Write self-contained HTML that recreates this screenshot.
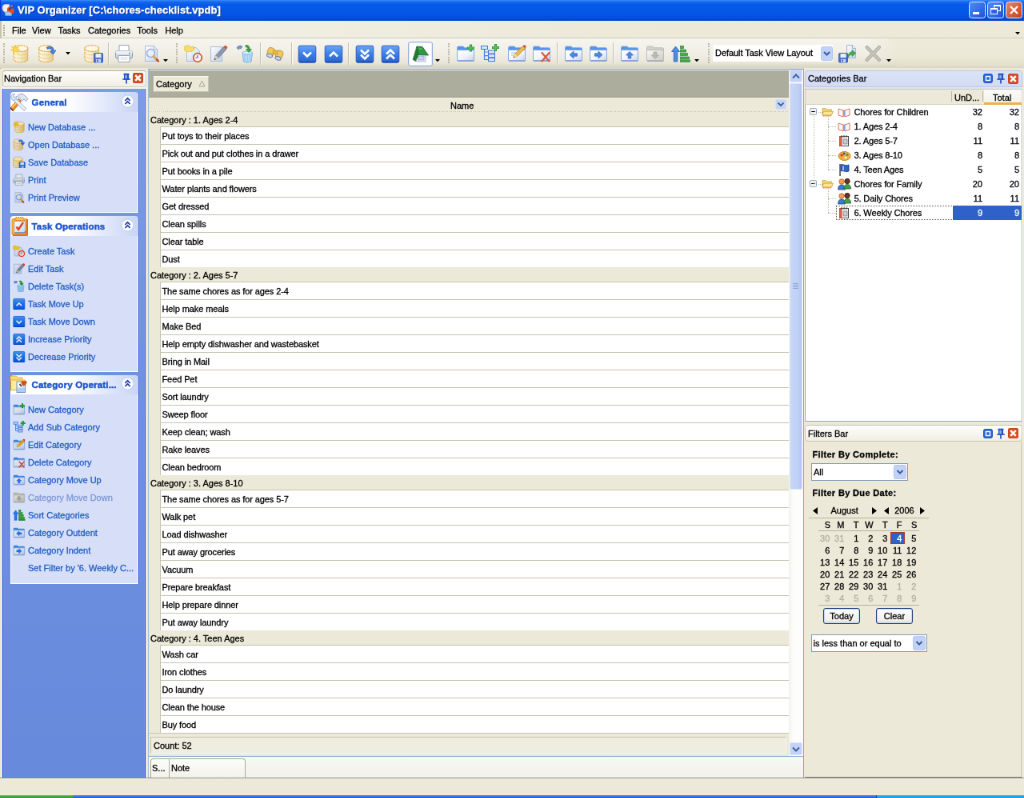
<!DOCTYPE html><html><head><meta charset="utf-8"><title>VIP Organizer</title><style>
html,body{margin:0;padding:0;background:#ECE9D8;overflow:hidden;width:1024px;height:798px}
#w{position:absolute;left:0;top:0;width:1280px;height:998px;transform:scale(.8);transform-origin:0 0;
 font-family:"Liberation Sans",sans-serif;font-size:11px;color:#000;overflow:hidden;will-change:transform;-webkit-text-stroke:0.3px}
#w div,#w span,#w svg{position:absolute;box-sizing:border-box;white-space:nowrap}
.t{line-height:14px;height:14px}
</style></head><body><div id="w">
<svg style="left:0;top:0" width="0" height="0"><defs>
<linearGradient id="gcyl" x1="0" x2="1" y1="0" y2="0"><stop offset="0" stop-color="#FDF8E6"/><stop offset=".45" stop-color="#F6ECCB"/><stop offset="1" stop-color="#E3CE98"/></linearGradient>
<linearGradient id="gblue" x1="0" x2="0" y1="0" y2="1"><stop offset="0" stop-color="#6CA6F6"/><stop offset=".5" stop-color="#3B7EE6"/><stop offset="1" stop-color="#2C64CC"/></linearGradient>
<linearGradient id="gfold" x1="0" x2="1" y1="0" y2="1"><stop offset="0" stop-color="#FFFFFF"/><stop offset=".55" stop-color="#F0F4FC"/><stop offset="1" stop-color="#C4D4F0"/></linearGradient>
<linearGradient id="gfoldg" x1="0" x2="1" y1="0" y2="1"><stop offset="0" stop-color="#FAFAF8"/><stop offset="1" stop-color="#CCCBC4"/></linearGradient>
<linearGradient id="gpaper" x1="0" x2="1" y1="0" y2="1"><stop offset="0" stop-color="#FFFFFF"/><stop offset="1" stop-color="#C4D4F0"/></linearGradient>
</defs></svg>
<div style="left:0px;top:0px;width:1280px;height:25.7px;background:linear-gradient(#3E8CF8 0,#1568F0 2.5px,#075AEA 6px,#0556E6 18px,#044EDC 23px,#0242C8 25.7px)"></div>
<div class="t" style="left:22px;top:4px;font-weight:bold;font-size:13px;color:#fff;line-height:18px;height:18px;text-shadow:1px 1px 0 #0A2A86;letter-spacing:0.05px">VIP Organizer [C:\chores-checklist.vpdb]</div>
<svg style="left:2px;top:4.5px" width="17" height="16" viewBox="0 0 17 16"><path d="M1 4C1 1.5 3 .5 5 .5H9.5L10 9.5L4 10C2 9.5 1 7 1 4Z" fill="#F8ECE6" stroke="#E8C4B8" stroke-width=".6"/><path d="M4 10H12.5V14.5H5Z" fill="#A8C8F4" stroke="#7CA4E0" stroke-width=".6"/><path d="M7 5.5L9 3.5L10.5 5.5V9.5H7Z" fill="#E84C14"/><path d="M11 2L13 1L14 3L12.5 4Z" fill="#F06828"/><path d="M10.5 6L15.5 5.5V11.5H11Z" fill="#E85018"/><circle cx="10" cy="6.5" r="1" fill="#302018"/></svg>
<div style="left:0px;top:0px;width:1.2px;height:25.7px;background:#0A3CC4"></div>
<div style="left:1211.3px;top:2px;width:20.7px;height:21px;border-radius:3.5px;border:1.2px solid #E4ECFC;background:linear-gradient(135deg,#4F8CF5,#1F55D8)"><div style="left:3.5px;top:11.5px;width:8px;height:3.2px;background:#fff"></div></div>
<div style="left:1234px;top:2px;width:20.7px;height:21px;border-radius:3.5px;border:1.2px solid #E4ECFC;background:linear-gradient(135deg,#4F8CF5,#1F55D8)"><div style="left:7px;top:3px;width:9px;height:8px;border:1px solid #fff;border-top-width:2px"></div><div style="left:3px;top:7px;width:9px;height:8px;border:1px solid #fff;border-top-width:2px;background:#2E62DC"></div></div>
<div style="left:1257px;top:2px;width:20.7px;height:21px;border-radius:3.5px;border:1.2px solid #E4ECFC;background:linear-gradient(135deg,#E88664,#C8401C)"><svg style="left:3px;top:3px" width="13" height="13" viewBox="0 0 13 13"><path d="M2 2 L11 11 M11 2 L2 11" stroke="#fff" stroke-width="2.2"/></svg></div>
<div style="left:0px;top:25.7px;width:1280px;height:22.3px;background:linear-gradient(90deg,#F4F3EA 0,#F1EFE3 25%,#EDEADA 60%,#ECE9D8 100%);border-bottom:1.2px solid #D2CEBC"></div>
<div style="left:0px;top:26px;width:2px;height:60px;background:#C9C3AC"></div>
<div style="left:4px;top:31px;width:2px;height:2px;background:#B5B09D"></div>
<div style="left:4px;top:34px;width:2px;height:2px;background:#B5B09D"></div>
<div style="left:4px;top:37px;width:2px;height:2px;background:#B5B09D"></div>
<div style="left:4px;top:40px;width:2px;height:2px;background:#B5B09D"></div>
<div style="left:4px;top:43px;width:2px;height:2px;background:#B5B09D"></div>
<div class="t" style="left:15.0px;top:30.8px;">File</div>
<div class="t" style="left:40.0px;top:30.8px;">View</div>
<div class="t" style="left:72.5px;top:30.8px;">Tasks</div>
<div class="t" style="left:110.0px;top:30.8px;">Categories</div>
<div class="t" style="left:171.25px;top:30.8px;">Tools</div>
<div class="t" style="left:206.25px;top:30.8px;">Help</div>
<svg style="left:1269px;top:39.5px" width="6" height="3.4" viewBox="0 0 7 4"><path d="M0 0H7L3.5 4Z" fill="#000"/></svg>
<div style="left:0px;top:48px;width:1280px;height:37px;background:linear-gradient(#EEEBDB 0,#ECE9D8 60%,#E4E0CD 90%,#D9D5C2 100%)"></div>
<div style="left:0px;top:48px;width:1124px;height:35px;background:linear-gradient(#F6F5EF 0,#F1EFE5 55%,#E9E6D8 88%,#DAD6C4 100%);border-radius:0 4px 4px 0;-webkit-mask-image:linear-gradient(90deg,#000 96%,transparent 100%)"></div>
<div style="left:4px;top:54.0px;width:2.2px;height:2.2px;background:#B9B5A2;border-radius:.5px"></div>
<div style="left:4px;top:57.3px;width:2.2px;height:2.2px;background:#B9B5A2;border-radius:.5px"></div>
<div style="left:4px;top:60.6px;width:2.2px;height:2.2px;background:#B9B5A2;border-radius:.5px"></div>
<div style="left:4px;top:63.9px;width:2.2px;height:2.2px;background:#B9B5A2;border-radius:.5px"></div>
<div style="left:4px;top:67.2px;width:2.2px;height:2.2px;background:#B9B5A2;border-radius:.5px"></div>
<div style="left:4px;top:70.5px;width:2.2px;height:2.2px;background:#B9B5A2;border-radius:.5px"></div>
<div style="left:4px;top:73.8px;width:2.2px;height:2.2px;background:#B9B5A2;border-radius:.5px"></div>
<div style="left:4px;top:77.1px;width:2.2px;height:2.2px;background:#B9B5A2;border-radius:.5px"></div>
<svg style="left:13px;top:55px" width="24" height="24" viewBox="0 0 24 24"><g transform="translate(1.2,0)"><path d="M3 5.5V18.8C3 24 20.5 24 20.5 18.8V5.5Z" fill="url(#gcyl)" stroke="#E2A22E" stroke-width="1.15" stroke-dasharray="1.5 .8"/>
<ellipse cx="11.75" cy="5.5" rx="8.75" ry="3.9" fill="#FDF8E4" stroke="#E2A22E" stroke-width="1.15" stroke-dasharray="1.5 .8"/>
<path d="M3 10.2C3 15 20.5 15 20.5 10.2M3 14.6C3 19.4 20.5 19.4 20.5 14.6" fill="none" stroke="#EDBE62" stroke-width="1" stroke-dasharray="1.5 .9"/></g><path d="M6 1L7 4.5L10.5 3L8.5 6L12 7.5L8.3 8L9.5 11.5L6.5 9L4 12L4.3 8.3L0.5 8L3.8 6L1.5 3L5 4.3Z" fill="#FBD94A" stroke="#EDB52A" stroke-width=".6"/></svg>
<svg style="left:47px;top:55px" width="24" height="24" viewBox="0 0 24 24"><g transform="translate(-1.2,0)"><path d="M3 5.5V18.8C3 24 20.5 24 20.5 18.8V5.5Z" fill="url(#gcyl)" stroke="#E2A22E" stroke-width="1.15" stroke-dasharray="1.5 .8"/>
<ellipse cx="11.75" cy="5.5" rx="8.75" ry="3.9" fill="#FDF8E4" stroke="#E2A22E" stroke-width="1.15" stroke-dasharray="1.5 .8"/>
<path d="M3 10.2C3 15 20.5 15 20.5 10.2M3 14.6C3 19.4 20.5 19.4 20.5 14.6" fill="none" stroke="#EDBE62" stroke-width="1" stroke-dasharray="1.5 .9"/></g><path d="M11 4.5C15 1.5 20 3.5 20.5 8.5L23 8L19.5 13L15.5 9.5L18 9C17.5 6 14.5 5 12.5 6.5Z" fill="#4A84DC" stroke="#2A5CB4" stroke-width=".7"/></svg>
<svg style="left:105px;top:55px" width="24" height="24" viewBox="0 0 24 24"><g transform="translate(-2,0)"><path d="M3 5.5V18.8C3 24 20.5 24 20.5 18.8V5.5Z" fill="url(#gcyl)" stroke="#E2A22E" stroke-width="1.15" stroke-dasharray="1.5 .8"/>
<ellipse cx="11.75" cy="5.5" rx="8.75" ry="3.9" fill="#FDF8E4" stroke="#E2A22E" stroke-width="1.15" stroke-dasharray="1.5 .8"/>
<path d="M3 10.2C3 15 20.5 15 20.5 10.2M3 14.6C3 19.4 20.5 19.4 20.5 14.6" fill="none" stroke="#EDBE62" stroke-width="1" stroke-dasharray="1.5 .9"/></g><rect x="12.5" y="11.5" width="11" height="11.5" rx="1" fill="#4878D0" stroke="#2E56A8" stroke-width=".9"/><rect x="14.5" y="12" width="7" height="5" fill="#E8EEF8"/><rect x="15" y="19" width="6" height="4" fill="#C8D4EC"/><rect x="16" y="19.7" width="1.6" height="2.6" fill="#2E56A8"/></svg>
<svg style="left:143px;top:55px" width="24" height="24" viewBox="0 0 24 24"><path d="M6 1.5H18V9H6Z" fill="#FFFFFF" stroke="#8C9CB4" stroke-width=".9"/><rect x="1.5" y="8.5" width="21" height="9.5" rx="2.2" fill="#D4DAE6" stroke="#7C8CA8" stroke-width=".9"/><rect x="1.5" y="8.5" width="21" height="4" rx="2" fill="#EEF1F6"/><path d="M5 14.5H19V22.5H5Z" fill="#FFFFFF" stroke="#8C9CB4" stroke-width=".9"/><path d="M7.5 17H16.5M7.5 19H16.5" stroke="#C4CCDC" stroke-width=".8"/><circle cx="19" cy="11.5" r=".9" fill="#48B048"/></svg>
<svg style="left:177px;top:55px" width="24" height="24" viewBox="0 0 24 24"><path d="M4.5 2.5H15.5L19.5 6.5V21.5H4.5Z" fill="url(#gpaper)" stroke="#A4B4D4" stroke-width=".9"/><path d="M15.5 2.5V6.5H19.5" fill="#E8EEFA" stroke="#A4B4D4" stroke-width=".9"/><circle cx="11.5" cy="11.5" r="5" fill="#E6F0FC" fill-opacity=".85" stroke="#9CB0D4" stroke-width="1.6"/><path d="M15 15.5L20.5 21" stroke="#D8A848" stroke-width="2.6" stroke-linecap="round"/><path d="M19 19.5L20.8 21.3" stroke="#C05030" stroke-width="2.6" stroke-linecap="round"/></svg>
<svg style="left:230px;top:55px" width="24" height="24" viewBox="0 0 24 24"><path d="M3.5 4.5H15L19.5 9V21.5H3.5Z" fill="url(#gpaper)" stroke="#A4B4D4" stroke-width=".9"/><path d="M.8 3L5.5 1.5L7.5 4L11.5 3L13.5 6L10 9.5L6.5 9L3.5 10.5L.8 8Z" fill="#FADC6C" stroke="#E8B838" stroke-width=".8"/><circle cx="17" cy="17" r="5.3" fill="#F4F6FA" stroke="#DC4C34" stroke-width="1.7"/><path d="M17 14V17H14.5" stroke="#506078" stroke-width="1.1" fill="none"/></svg>
<svg style="left:261px;top:55px" width="24" height="24" viewBox="0 0 24 24"><path d="M2.5 3.5H16.5V21.5H2.5Z" fill="url(#gpaper)" stroke="#A4B4D4" stroke-width=".9"/><path d="M7 20L8.5 14.5L18.5 3.5L22 6.5L12 17.5Z" fill="#8C98AC" stroke="#5C6880" stroke-width=".7"/><path d="M18.5 3.5L20 2C21.5 1.5 23.5 3 23.2 4.8L22 6.5Z" fill="#DC4C34"/><path d="M7 20L8.5 14.5L12 17.5Z" fill="#F0D8A0"/><path d="M7 20L7.6 17.8L8.8 18.9Z" fill="#303030"/></svg>
<svg style="left:294px;top:55px" width="24" height="24" viewBox="0 0 24 24"><path d="M9 11H21.5L20 22C17 23.5 13.5 23.5 10.5 22Z" fill="#B8DCF8" stroke="#7CB4E4" stroke-width="1"/><path d="M12 13V21.5M15.2 13V22M18.5 13V21.5" stroke="#98C8F0" stroke-width="1.2"/><ellipse cx="15.2" cy="11" rx="6.4" ry="2" fill="#DCEEFC" stroke="#7CB4E4" stroke-width=".9"/><path d="M2 5C3 2 7 1 9 3.5L7 6C5.5 5 4.5 5.5 4.5 7Z" fill="#7C94C8" stroke="#5870A8" stroke-width=".6"/><path d="M13 1.5C16.5 1 18.5 3.5 18 6.5L20.5 6.5L17 10.5L13.5 6.5L15.8 6.5C15.8 4.8 15 3.8 13 3.8Z" fill="#3CA448" stroke="#207C30" stroke-width=".6"/></svg>
<svg style="left:332px;top:55px" width="24" height="24" viewBox="0 0 24 24"><g transform="rotate(18 12 12)"><rect x="2" y="6.5" width="8.5" height="10" rx="3" fill="#F0C860" stroke="#C8982C" stroke-width=".9"/><rect x="13" y="6.5" width="8.5" height="10" rx="3" fill="#F0C860" stroke="#C8982C" stroke-width=".9"/><rect x="9" y="8" width="5.5" height="5" fill="#E8B848" stroke="#C8982C" stroke-width=".8"/><ellipse cx="6.2" cy="16.5" rx="3.6" ry="2.2" fill="#C8D4F0" stroke="#6C7C9C" stroke-width="1"/><ellipse cx="17.2" cy="16.5" rx="3.6" ry="2.2" fill="#C8D4F0" stroke="#6C7C9C" stroke-width="1"/></g></svg>
<svg style="left:372px;top:55px" width="24" height="24" viewBox="0 0 24 24"><rect x="1.2" y="2.2" width="21.6" height="21" rx="2" fill="url(#gblue)" stroke="#2A5CC0" stroke-width="1"/><rect x="1.7" y="21.4" width="20.6" height="1.8" rx="1" fill="#1E4CA8" opacity=".7"/><path d="M7 10.5L12 15.5L17 10.5" fill="none" stroke="#fff" stroke-width="2.6" stroke-linejoin="miter"/></svg>
<svg style="left:405px;top:55px" width="24" height="24" viewBox="0 0 24 24"><rect x="1.2" y="2.2" width="21.6" height="21" rx="2" fill="url(#gblue)" stroke="#2A5CC0" stroke-width="1"/><rect x="1.7" y="21.4" width="20.6" height="1.8" rx="1" fill="#1E4CA8" opacity=".7"/><path d="M7 15.5L12 10.5L17 15.5" fill="none" stroke="#fff" stroke-width="2.6" stroke-linejoin="miter"/></svg>
<svg style="left:444px;top:55px" width="24" height="24" viewBox="0 0 24 24"><rect x="1.2" y="2.2" width="21.6" height="21" rx="2" fill="url(#gblue)" stroke="#2A5CC0" stroke-width="1"/><rect x="1.7" y="21.4" width="20.6" height="1.8" rx="1" fill="#1E4CA8" opacity=".7"/><path d="M7 7.5L12 12.5L17 7.5M7 13.5L12 18.5L17 13.5" fill="none" stroke="#fff" stroke-width="2.6" stroke-linejoin="miter"/></svg>
<svg style="left:476px;top:55px" width="24" height="24" viewBox="0 0 24 24"><rect x="1.2" y="2.2" width="21.6" height="21" rx="2" fill="url(#gblue)" stroke="#2A5CC0" stroke-width="1"/><rect x="1.7" y="21.4" width="20.6" height="1.8" rx="1" fill="#1E4CA8" opacity=".7"/><path d="M7 12.5L12 7.5L17 12.5M7 18.5L12 13.5L17 18.5" fill="none" stroke="#fff" stroke-width="2.6" stroke-linejoin="miter"/></svg>
<svg style="left:570px;top:55px" width="24" height="24" viewBox="0 0 24 24"><path d="M1.5 7V4.5C1.5 3.5 2.2 3 3 3H9L10.5 4.7H21C22 4.7 22.5 5.4 22.5 6.2V7.5H1.5Z" fill="#5594EA" stroke="#7CA4DC" stroke-width=".8"/><path d="M1.5 7.5H22.5V20.5H1.5Z" fill="url(#gfold)" stroke="#7CA4DC" stroke-width=".9"/><path d="M2 21.4H22.5" stroke="#7C8CB0" stroke-width="1" opacity=".8"/><path d="M18.5 0.5V9.5M14.0 5H23.0" stroke="#2C9C3C" stroke-width="3.2"/><path d="M18.5 1.2999999999999998V8.7M14.8 5H22.2" stroke="#58C060" stroke-width="1.4"/></svg>
<svg style="left:600px;top:55px" width="24" height="24" viewBox="0 0 24 24"><path d="M5.5 6V19.5H10M5.5 10H10M5.5 14.7H10" stroke="#4C84DC" stroke-width="1.2" fill="none"/><rect x="1.5" y="2.5" width="8" height="4" fill="#DCE8FA" stroke="#3C78DC" stroke-width="1"/><rect x="10.5" y="8" width="8" height="4" fill="#DCE8FA" stroke="#3C78DC" stroke-width="1"/><rect x="10.5" y="12.8" width="8" height="4" fill="#DCE8FA" stroke="#3C78DC" stroke-width="1"/><rect x="10.5" y="17.6" width="8" height="4" fill="#DCE8FA" stroke="#3C78DC" stroke-width="1"/><path d="M19.5 0.0V9.0M15.0 4.5H24.0" stroke="#2C9C3C" stroke-width="3.2"/><path d="M19.5 0.7999999999999998V8.2M15.8 4.5H23.2" stroke="#58C060" stroke-width="1.4"/></svg>
<svg style="left:634px;top:55px" width="24" height="24" viewBox="0 0 24 24"><path d="M1.5 7V4.5C1.5 3.5 2.2 3 3 3H9L10.5 4.7H21C22 4.7 22.5 5.4 22.5 6.2V7.5H1.5Z" fill="#5594EA" stroke="#7CA4DC" stroke-width=".8"/><path d="M1.5 7.5H22.5V20.5H1.5Z" fill="url(#gfold)" stroke="#7CA4DC" stroke-width=".9"/><path d="M2 21.4H22.5" stroke="#7C8CB0" stroke-width="1" opacity=".8"/><path d="M5 11H13M5 14H11" stroke="#A8BCE0" stroke-width="1"/><path d="M8 17L9.5 12.5L19.5 2.5L22.5 5.5L12.5 15.5Z" fill="#F0B848" stroke="#B88428" stroke-width=".7"/><path d="M19.5 2.5L21 1.2C22.3 .8 23.8 2.2 23.5 3.8L22.5 5.5Z" fill="#DC4C34"/><path d="M8 17L9.5 12.5L12.5 15.5Z" fill="#F4E4C0"/><path d="M8 17L8.6 15.2L9.8 16.3Z" fill="#303030"/></svg>
<svg style="left:665px;top:55px" width="24" height="24" viewBox="0 0 24 24"><path d="M1.5 7V4.5C1.5 3.5 2.2 3 3 3H9L10.5 4.7H21C22 4.7 22.5 5.4 22.5 6.2V7.5H1.5Z" fill="#5594EA" stroke="#7CA4DC" stroke-width=".8"/><path d="M1.5 7.5H22.5V20.5H1.5Z" fill="url(#gfold)" stroke="#7CA4DC" stroke-width=".9"/><path d="M2 21.4H22.5" stroke="#7C8CB0" stroke-width="1" opacity=".8"/><path d="M12.5 11L21.5 21.5M21.5 11L12.5 21.5" stroke="#E0583C" stroke-width="2.2" stroke-linecap="round"/></svg>
<svg style="left:705px;top:55px" width="24" height="24" viewBox="0 0 24 24"><path d="M1.5 7V4.5C1.5 3.5 2.2 3 3 3H9L10.5 4.7H21C22 4.7 22.5 5.4 22.5 6.2V7.5H1.5Z" fill="#5594EA" stroke="#7CA4DC" stroke-width=".8"/><path d="M1.5 7.5H22.5V20.5H1.5Z" fill="url(#gfold)" stroke="#7CA4DC" stroke-width=".9"/><path d="M2 21.4H22.5" stroke="#7C8CB0" stroke-width="1" opacity=".8"/><path d="M7 13.5L12 9V11.8H16.5V15.2H12V18Z" fill="#4C88E4" stroke="#2C60C0" stroke-width=".7"/></svg>
<svg style="left:736px;top:55px" width="24" height="24" viewBox="0 0 24 24"><path d="M1.5 7V4.5C1.5 3.5 2.2 3 3 3H9L10.5 4.7H21C22 4.7 22.5 5.4 22.5 6.2V7.5H1.5Z" fill="#5594EA" stroke="#7CA4DC" stroke-width=".8"/><path d="M1.5 7.5H22.5V20.5H1.5Z" fill="url(#gfold)" stroke="#7CA4DC" stroke-width=".9"/><path d="M2 21.4H22.5" stroke="#7C8CB0" stroke-width="1" opacity=".8"/><path d="M17 13.5L12 9V11.8H7.5V15.2H12V18Z" fill="#4C88E4" stroke="#2C60C0" stroke-width=".7"/></svg>
<svg style="left:775px;top:55px" width="24" height="24" viewBox="0 0 24 24"><path d="M1.5 7V4.5C1.5 3.5 2.2 3 3 3H9L10.5 4.7H21C22 4.7 22.5 5.4 22.5 6.2V7.5H1.5Z" fill="#5594EA" stroke="#7CA4DC" stroke-width=".8"/><path d="M1.5 7.5H22.5V20.5H1.5Z" fill="url(#gfold)" stroke="#7CA4DC" stroke-width=".9"/><path d="M2 21.4H22.5" stroke="#7C8CB0" stroke-width="1" opacity=".8"/><path d="M12 9.5L16.5 14H13.8V18H10.2V14H7.5Z" fill="#4C88E4" stroke="#2C60C0" stroke-width=".7"/></svg>
<svg style="left:807px;top:55px" width="24" height="24" viewBox="0 0 24 24"><path d="M1.5 7V4.5C1.5 3.5 2.2 3 3 3H9L10.5 4.7H21C22 4.7 22.5 5.4 22.5 6.2V7.5H1.5Z" fill="#D4D2CA" stroke="#B8B6AE" stroke-width=".8"/><path d="M1.5 7.5H22.5V20.5H1.5Z" fill="url(#gfoldg)" stroke="#B8B6AE" stroke-width=".9"/><path d="M2 21.4H22.5" stroke="#7C8CB0" stroke-width="1" opacity=".8"/><path d="M12 18.5L16.5 14H13.8V10H10.2V14H7.5Z" fill="#BCBAB2" stroke="#A4A29A" stroke-width=".7"/></svg>
<svg style="left:839px;top:55px" width="24" height="24" viewBox="0 0 24 24"><path d="M5.5 3L10.5 9.5H7.8V22H3.2V9.5H0.5Z" fill="#4C8CE4" stroke="#2A60B8" stroke-width=".8"/><g fill="#4CAC50" stroke="#2C8434" stroke-width=".7"><rect x="11.5" y="2.5" width="4" height="3"/><rect x="11.5" y="7" width="7" height="3"/><rect x="11.5" y="11.5" width="9" height="3"/><rect x="11.5" y="16" width="11" height="3"/><rect x="11.5" y="20" width="12" height="2.5"/></g></svg>
<svg style="left:1047px;top:55px" width="24" height="24" viewBox="0 0 24 24"><path d="M11.5 1.5H18.5L22.5 5.5V17.5H11.5Z" fill="url(#gpaper)" stroke="#98ACD4" stroke-width=".9"/><path d="M18.5 1.5V5.5H22.5" fill="#E8EEFA" stroke="#98ACD4" stroke-width=".9"/><rect x="1.5" y="11.5" width="11" height="11.5" rx="1" fill="#4878D0" stroke="#2E56A8" stroke-width=".9"/><rect x="3.5" y="12" width="7" height="5" fill="#E8EEF8"/><rect x="4" y="19" width="6" height="4" fill="#C8D4EC"/><rect x="5" y="19.7" width="1.6" height="2.6" fill="#2E56A8"/><path d="M13 17C13 12 15 10 18 10V7.5L22.5 11.5L18 15.5V13C16 13 14.5 14 13 17Z" fill="#48AC50" stroke="#2C8434" stroke-width=".7"/></svg>
<svg style="left:1079px;top:55px" width="24" height="24" viewBox="0 0 24 24"><path d="M4.5 4L20 20M20 4L4.5 20" stroke="#B0AEA4" stroke-width="4.2" stroke-linecap="round"/><path d="M4.5 4L20 20M20 4L4.5 20" stroke="#C8C6BC" stroke-width="2" stroke-linecap="round"/></svg>
<div style="left:135px;top:53px;width:1px;height:28px;background:#C5C1AE"></div>
<div style="left:136px;top:53px;width:1px;height:28px;background:#FBFAF6"></div>
<div style="left:325px;top:53px;width:1px;height:28px;background:#C5C1AE"></div>
<div style="left:326px;top:53px;width:1px;height:28px;background:#FBFAF6"></div>
<div style="left:364px;top:53px;width:1px;height:28px;background:#C5C1AE"></div>
<div style="left:365px;top:53px;width:1px;height:28px;background:#FBFAF6"></div>
<div style="left:435px;top:53px;width:1px;height:28px;background:#C5C1AE"></div>
<div style="left:436px;top:53px;width:1px;height:28px;background:#FBFAF6"></div>
<div style="left:696px;top:53px;width:1px;height:28px;background:#C5C1AE"></div>
<div style="left:697px;top:53px;width:1px;height:28px;background:#FBFAF6"></div>
<div style="left:766px;top:53px;width:1px;height:28px;background:#C5C1AE"></div>
<div style="left:767px;top:53px;width:1px;height:28px;background:#FBFAF6"></div>
<div style="left:220px;top:54.0px;width:2.2px;height:2.2px;background:#B9B5A2;border-radius:.5px"></div>
<div style="left:220px;top:57.3px;width:2.2px;height:2.2px;background:#B9B5A2;border-radius:.5px"></div>
<div style="left:220px;top:60.6px;width:2.2px;height:2.2px;background:#B9B5A2;border-radius:.5px"></div>
<div style="left:220px;top:63.9px;width:2.2px;height:2.2px;background:#B9B5A2;border-radius:.5px"></div>
<div style="left:220px;top:67.2px;width:2.2px;height:2.2px;background:#B9B5A2;border-radius:.5px"></div>
<div style="left:220px;top:70.5px;width:2.2px;height:2.2px;background:#B9B5A2;border-radius:.5px"></div>
<div style="left:220px;top:73.8px;width:2.2px;height:2.2px;background:#B9B5A2;border-radius:.5px"></div>
<div style="left:220px;top:77.1px;width:2.2px;height:2.2px;background:#B9B5A2;border-radius:.5px"></div>
<div style="left:560px;top:54.0px;width:2.2px;height:2.2px;background:#B9B5A2;border-radius:.5px"></div>
<div style="left:560px;top:57.3px;width:2.2px;height:2.2px;background:#B9B5A2;border-radius:.5px"></div>
<div style="left:560px;top:60.6px;width:2.2px;height:2.2px;background:#B9B5A2;border-radius:.5px"></div>
<div style="left:560px;top:63.9px;width:2.2px;height:2.2px;background:#B9B5A2;border-radius:.5px"></div>
<div style="left:560px;top:67.2px;width:2.2px;height:2.2px;background:#B9B5A2;border-radius:.5px"></div>
<div style="left:560px;top:70.5px;width:2.2px;height:2.2px;background:#B9B5A2;border-radius:.5px"></div>
<div style="left:560px;top:73.8px;width:2.2px;height:2.2px;background:#B9B5A2;border-radius:.5px"></div>
<div style="left:560px;top:77.1px;width:2.2px;height:2.2px;background:#B9B5A2;border-radius:.5px"></div>
<div style="left:885px;top:54.0px;width:2.2px;height:2.2px;background:#B9B5A2;border-radius:.5px"></div>
<div style="left:885px;top:57.3px;width:2.2px;height:2.2px;background:#B9B5A2;border-radius:.5px"></div>
<div style="left:885px;top:60.6px;width:2.2px;height:2.2px;background:#B9B5A2;border-radius:.5px"></div>
<div style="left:885px;top:63.9px;width:2.2px;height:2.2px;background:#B9B5A2;border-radius:.5px"></div>
<div style="left:885px;top:67.2px;width:2.2px;height:2.2px;background:#B9B5A2;border-radius:.5px"></div>
<div style="left:885px;top:70.5px;width:2.2px;height:2.2px;background:#B9B5A2;border-radius:.5px"></div>
<div style="left:885px;top:73.8px;width:2.2px;height:2.2px;background:#B9B5A2;border-radius:.5px"></div>
<div style="left:885px;top:77.1px;width:2.2px;height:2.2px;background:#B9B5A2;border-radius:.5px"></div>
<svg style="left:82px;top:65px" width="6" height="3.4" viewBox="0 0 7 4"><path d="M0 0H7L3.5 4Z" fill="#000"/></svg>
<svg style="left:204px;top:74px" width="6" height="3.4" viewBox="0 0 7 4"><path d="M0 0H7L3.5 4Z" fill="#000"/></svg>
<svg style="left:544px;top:74px" width="6" height="3.4" viewBox="0 0 7 4"><path d="M0 0H7L3.5 4Z" fill="#000"/></svg>
<svg style="left:868px;top:74px" width="6" height="3.4" viewBox="0 0 7 4"><path d="M0 0H7L3.5 4Z" fill="#000"/></svg>
<svg style="left:1108px;top:74px" width="6" height="3.4" viewBox="0 0 7 4"><path d="M0 0H7L3.5 4Z" fill="#000"/></svg>
<div style="left:510px;top:52px;width:31px;height:31px;background:#FFFFFF;border:1px solid #98B0DC;border-radius:3px;box-shadow:inset 0 0 0 1px #E4ECFA"></div>
<svg style="left:513px;top:55px" width="24" height="24" viewBox="0 0 24 24"><path d="M7 12.5H19V22H7Z" fill="#F4F6FA" stroke="#A8B0C4" stroke-width=".9"/><rect x="9.5" y="15" width="7.5" height="5" fill="#C4D4F0" stroke="#8CA0C8" stroke-width=".7"/><path d="M8 3L3 19.5L6.5 21.5L10.5 13Z" fill="#237A30" stroke="#1C6428" stroke-width=".8" stroke-dasharray="2 1"/><path d="M8 3L15 3.5L22.5 14L10.5 13.5Z" fill="#2E9840" stroke="#1C6428" stroke-width=".8"/><path d="M11 6H14.5" stroke="#80D088" stroke-width="1"/></svg>
<div style="left:891px;top:56px;width:150px;height:21px;background:#fff;border:1px solid #FDFDFB"></div>
<div class="t" style="left:894px;top:59px;letter-spacing:-0.05px">Default Task View Layout</div>
<svg style="left:1026px;top:58px" width="15" height="18" viewBox="0 0 15 18"><rect x="0.5" y="0.5" width="14" height="17" rx="2" fill="#C1D2F8" stroke="#B4C8F4"/><path d="M4 7L7.5 10.5L11 7" stroke="#3F5E98" stroke-width="2" fill="none"/></svg>
<div style="left:2px;top:108px;width:181px;height:3.5px;background:#F6F5EE"></div>
<div style="left:2.5px;top:88px;width:180px;height:20.5px;border:1px solid #C9C5B2;border-bottom-color:#D2CEBE;border-radius:4px;background:linear-gradient(#FEFEFC,#F1EFE4)"></div>
<div class="t" style="left:5px;top:91px;">Navigation Bar</div>
<svg style="left:152px;top:91px" width="12" height="14" viewBox="0 0 12 14"><path d="M2.5 1.6H9.5M1.2 8H10.8M6 8.5V13.5" stroke="#2050C4" stroke-width="1.7" fill="none"/><path d="M3.6 2V8H8.4V2Z" fill="#8CAAE8" stroke="#2050C4" stroke-width="1.3"/><path d="M7.6 2V8" stroke="#2050C4" stroke-width="1.3"/></svg>
<svg style="left:166px;top:91px" width="13" height="13" viewBox="0 0 13 13"><rect x="0.5" y="0.5" width="12" height="12" rx="1.2" fill="#D4502A" stroke="#C8441E"/><path d="M3.2 3.2L9.8 9.8M9.8 3.2L3.2 9.8" stroke="#fff" stroke-width="2.4"/></svg>
<div style="left:2px;top:111.2px;width:181px;height:860.8px;background:linear-gradient(#7B9CE6 0,#6F92E2 40%,#678ADC 100%);border-left:1px solid #5F82D6"></div>
<div style="left:12.5px;top:115px;width:160px;height:24.5px;border-radius:4px 4px 0 0;background:linear-gradient(90deg,#FFFFFF 0,#FFFFFF 45%,#C9D5F7 100%)"></div>
<div class="t" style="left:39.5px;top:120.5px;font-weight:bold;font-size:11.6px;color:#1F55CC;letter-spacing:0.13px;-webkit-text-stroke:0.45px">General</div>
<svg style="left:150.4px;top:116.7px" width="19" height="19" viewBox="0 0 19 19"><circle cx="9.5" cy="9.5" r="7.6" fill="#fff" stroke="#C4D0F0" stroke-width="1.3"/><path d="M6.3 9L9.5 5.8L12.7 9 M6.3 13L9.5 9.8L12.7 13" stroke="#1A3EB0" stroke-width="1.7" fill="none"/></svg>
<svg style="left:11.6px;top:116px" width="24" height="24" viewBox="0 0 24 24"><path d="M1 19L11 7.5L14.5 10.5L4.5 22.5Z" fill="#F09028" stroke="#B04010" stroke-width=".8"/><path d="M3 18.5L11.5 9" stroke="#FCD860" stroke-width="1.6"/><path d="M1 19L4.5 22.5" stroke="#6C2808" stroke-width="1.6"/>
<path d="M9.5 4.5C11.5 1 16 .5 18.5 3L23 7.5L20.5 10.5L18 8L16 10L11.5 6Z" fill="#DCE6F6" stroke="#8098C4" stroke-width=".9"/>
<path d="M7.5 7L20.5 19.5L18 22.5L5 9.5Z" fill="#E8F0FC" stroke="#8CA4D0" stroke-width=".9"/><path d="M2 6.5C1 3.5 3.5 1 6.5 1.5L4.5 4L6 6L8.5 4.5C9 7.5 6.5 10 3.5 9Z" fill="#E0EAFA" stroke="#8CA4D0" stroke-width=".9"/></svg>
<div style="left:12.5px;top:139.5px;width:160px;height:126px;background:#D6DFF7;border:1px solid #fff;border-top:none"></div>
<svg style="filter:saturate(1.4) brightness(.86) contrast(1.12);left:16.3px;top:150.60000000000002px" width="15.6" height="15.6" viewBox="0 0 24 24"><g transform="translate(1.2,0)"><path d="M3 5.5V18.8C3 24 20.5 24 20.5 18.8V5.5Z" fill="url(#gcyl)" stroke="#E2A22E" stroke-width="1.15" stroke-dasharray="1.5 .8"/>
<ellipse cx="11.75" cy="5.5" rx="8.75" ry="3.9" fill="#FDF8E4" stroke="#E2A22E" stroke-width="1.15" stroke-dasharray="1.5 .8"/>
<path d="M3 10.2C3 15 20.5 15 20.5 10.2M3 14.6C3 19.4 20.5 19.4 20.5 14.6" fill="none" stroke="#EDBE62" stroke-width="1" stroke-dasharray="1.5 .9"/></g><path d="M6 1L7 4.5L10.5 3L8.5 6L12 7.5L8.3 8L9.5 11.5L6.5 9L4 12L4.3 8.3L0.5 8L3.8 6L1.5 3L5 4.3Z" fill="#FBD94A" stroke="#EDB52A" stroke-width=".6"/></svg>
<div class="t" style="left:35px;top:151.8px;color:#215DC6">New Database ...</div>
<svg style="filter:saturate(1.4) brightness(.86) contrast(1.12);left:16.3px;top:172.60000000000002px" width="15.6" height="15.6" viewBox="0 0 24 24"><g transform="translate(-1.2,0)"><path d="M3 5.5V18.8C3 24 20.5 24 20.5 18.8V5.5Z" fill="url(#gcyl)" stroke="#E2A22E" stroke-width="1.15" stroke-dasharray="1.5 .8"/>
<ellipse cx="11.75" cy="5.5" rx="8.75" ry="3.9" fill="#FDF8E4" stroke="#E2A22E" stroke-width="1.15" stroke-dasharray="1.5 .8"/>
<path d="M3 10.2C3 15 20.5 15 20.5 10.2M3 14.6C3 19.4 20.5 19.4 20.5 14.6" fill="none" stroke="#EDBE62" stroke-width="1" stroke-dasharray="1.5 .9"/></g><path d="M11 4.5C15 1.5 20 3.5 20.5 8.5L23 8L19.5 13L15.5 9.5L18 9C17.5 6 14.5 5 12.5 6.5Z" fill="#4A84DC" stroke="#2A5CB4" stroke-width=".7"/></svg>
<div class="t" style="left:35px;top:173.8px;color:#215DC6">Open Database ...</div>
<svg style="filter:saturate(1.4) brightness(.86) contrast(1.12);left:16.3px;top:194.60000000000002px" width="15.6" height="15.6" viewBox="0 0 24 24"><g transform="translate(-2,0)"><path d="M3 5.5V18.8C3 24 20.5 24 20.5 18.8V5.5Z" fill="url(#gcyl)" stroke="#E2A22E" stroke-width="1.15" stroke-dasharray="1.5 .8"/>
<ellipse cx="11.75" cy="5.5" rx="8.75" ry="3.9" fill="#FDF8E4" stroke="#E2A22E" stroke-width="1.15" stroke-dasharray="1.5 .8"/>
<path d="M3 10.2C3 15 20.5 15 20.5 10.2M3 14.6C3 19.4 20.5 19.4 20.5 14.6" fill="none" stroke="#EDBE62" stroke-width="1" stroke-dasharray="1.5 .9"/></g><rect x="12.5" y="11.5" width="11" height="11.5" rx="1" fill="#4878D0" stroke="#2E56A8" stroke-width=".9"/><rect x="14.5" y="12" width="7" height="5" fill="#E8EEF8"/><rect x="15" y="19" width="6" height="4" fill="#C8D4EC"/><rect x="16" y="19.7" width="1.6" height="2.6" fill="#2E56A8"/></svg>
<div class="t" style="left:35px;top:195.8px;color:#215DC6">Save Database</div>
<svg style="filter:saturate(1.4) brightness(.86) contrast(1.12);left:16.3px;top:216.60000000000002px" width="15.6" height="15.6" viewBox="0 0 24 24"><path d="M6 1.5H18V9H6Z" fill="#FFFFFF" stroke="#8C9CB4" stroke-width=".9"/><rect x="1.5" y="8.5" width="21" height="9.5" rx="2.2" fill="#D4DAE6" stroke="#7C8CA8" stroke-width=".9"/><rect x="1.5" y="8.5" width="21" height="4" rx="2" fill="#EEF1F6"/><path d="M5 14.5H19V22.5H5Z" fill="#FFFFFF" stroke="#8C9CB4" stroke-width=".9"/><path d="M7.5 17H16.5M7.5 19H16.5" stroke="#C4CCDC" stroke-width=".8"/><circle cx="19" cy="11.5" r=".9" fill="#48B048"/></svg>
<div class="t" style="left:35px;top:217.8px;color:#215DC6">Print</div>
<svg style="filter:saturate(1.4) brightness(.86) contrast(1.12);left:16.3px;top:238.60000000000002px" width="15.6" height="15.6" viewBox="0 0 24 24"><path d="M4.5 2.5H15.5L19.5 6.5V21.5H4.5Z" fill="url(#gpaper)" stroke="#A4B4D4" stroke-width=".9"/><path d="M15.5 2.5V6.5H19.5" fill="#E8EEFA" stroke="#A4B4D4" stroke-width=".9"/><circle cx="11.5" cy="11.5" r="5" fill="#E6F0FC" fill-opacity=".85" stroke="#9CB0D4" stroke-width="1.6"/><path d="M15 15.5L20.5 21" stroke="#D8A848" stroke-width="2.6" stroke-linecap="round"/><path d="M19 19.5L20.8 21.3" stroke="#C05030" stroke-width="2.6" stroke-linecap="round"/></svg>
<div class="t" style="left:35px;top:239.8px;color:#215DC6">Print Preview</div>
<div style="left:12.5px;top:270px;width:160px;height:24.5px;border-radius:4px 4px 0 0;background:linear-gradient(90deg,#FFFFFF 0,#FFFFFF 45%,#C9D5F7 100%)"></div>
<div class="t" style="left:39.5px;top:275.5px;font-weight:bold;font-size:11.6px;color:#1F55CC;letter-spacing:0.13px;-webkit-text-stroke:0.45px">Task Operations</div>
<svg style="left:150.4px;top:271.7px" width="19" height="19" viewBox="0 0 19 19"><circle cx="9.5" cy="9.5" r="7.6" fill="#fff" stroke="#C4D0F0" stroke-width="1.3"/><path d="M6.3 9L9.5 5.8L12.7 9 M6.3 13L9.5 9.8L12.7 13" stroke="#1A3EB0" stroke-width="1.7" fill="none"/></svg>
<svg style="left:12.5px;top:270.5px" width="24" height="24" viewBox="0 0 24 24"><rect x="2" y="2.5" width="19" height="20.5" rx="1.5" fill="#F4B838" stroke="#E88820" stroke-width="1"/><path d="M21 3V23H3" stroke="#D85020" stroke-width="1.6" fill="none"/><rect x="5" y="5.5" width="13.5" height="14.5" fill="url(#gpaper)" stroke="#98A4B8" stroke-width=".7"/><path d="M5 20H18.5V17.5" stroke="#58647C" stroke-width="1.2" fill="none"/><path d="M7 .8H16L17.5 4.5H5.5Z" fill="#F8C848" stroke="#D85020" stroke-width=".9" stroke-dasharray="1.5 1"/><path d="M7.5 12.5L10 16L16 7" stroke="#DC4424" stroke-width="2.4" fill="none"/></svg>
<div style="left:12.5px;top:294.5px;width:160px;height:170px;background:#D6DFF7;border:1px solid #fff;border-top:none"></div>
<svg style="filter:saturate(1.4) brightness(.86) contrast(1.12);left:16.3px;top:305.6px" width="15.6" height="15.6" viewBox="0 0 24 24"><path d="M3.5 4.5H15L19.5 9V21.5H3.5Z" fill="url(#gpaper)" stroke="#A4B4D4" stroke-width=".9"/><path d="M.8 3L5.5 1.5L7.5 4L11.5 3L13.5 6L10 9.5L6.5 9L3.5 10.5L.8 8Z" fill="#FADC6C" stroke="#E8B838" stroke-width=".8"/><circle cx="17" cy="17" r="5.3" fill="#F4F6FA" stroke="#DC4C34" stroke-width="1.7"/><path d="M17 14V17H14.5" stroke="#506078" stroke-width="1.1" fill="none"/></svg>
<div class="t" style="left:35px;top:306.8px;color:#215DC6">Create Task</div>
<svg style="filter:saturate(1.4) brightness(.86) contrast(1.12);left:16.3px;top:327.6px" width="15.6" height="15.6" viewBox="0 0 24 24"><path d="M2.5 3.5H16.5V21.5H2.5Z" fill="url(#gpaper)" stroke="#A4B4D4" stroke-width=".9"/><path d="M7 20L8.5 14.5L18.5 3.5L22 6.5L12 17.5Z" fill="#8C98AC" stroke="#5C6880" stroke-width=".7"/><path d="M18.5 3.5L20 2C21.5 1.5 23.5 3 23.2 4.8L22 6.5Z" fill="#DC4C34"/><path d="M7 20L8.5 14.5L12 17.5Z" fill="#F0D8A0"/><path d="M7 20L7.6 17.8L8.8 18.9Z" fill="#303030"/></svg>
<div class="t" style="left:35px;top:328.8px;color:#215DC6">Edit Task</div>
<svg style="filter:saturate(1.4) brightness(.86) contrast(1.12);left:16.3px;top:349.6px" width="15.6" height="15.6" viewBox="0 0 24 24"><path d="M9 11H21.5L20 22C17 23.5 13.5 23.5 10.5 22Z" fill="#B8DCF8" stroke="#7CB4E4" stroke-width="1"/><path d="M12 13V21.5M15.2 13V22M18.5 13V21.5" stroke="#98C8F0" stroke-width="1.2"/><ellipse cx="15.2" cy="11" rx="6.4" ry="2" fill="#DCEEFC" stroke="#7CB4E4" stroke-width=".9"/><path d="M2 5C3 2 7 1 9 3.5L7 6C5.5 5 4.5 5.5 4.5 7Z" fill="#7C94C8" stroke="#5870A8" stroke-width=".6"/><path d="M13 1.5C16.5 1 18.5 3.5 18 6.5L20.5 6.5L17 10.5L13.5 6.5L15.8 6.5C15.8 4.8 15 3.8 13 3.8Z" fill="#3CA448" stroke="#207C30" stroke-width=".6"/></svg>
<div class="t" style="left:35px;top:350.8px;color:#215DC6">Delete Task(s)</div>
<svg style="filter:saturate(1.4) brightness(.86) contrast(1.12);left:16.3px;top:371.6px" width="15.6" height="15.6" viewBox="0 0 24 24"><rect x="1.2" y="2.2" width="21.6" height="21" rx="2" fill="url(#gblue)" stroke="#2A5CC0" stroke-width="1"/><rect x="1.7" y="21.4" width="20.6" height="1.8" rx="1" fill="#1E4CA8" opacity=".7"/><path d="M7 15.5L12 10.5L17 15.5" fill="none" stroke="#fff" stroke-width="2.6" stroke-linejoin="miter"/></svg>
<div class="t" style="left:35px;top:372.8px;color:#215DC6">Task Move Up</div>
<svg style="filter:saturate(1.4) brightness(.86) contrast(1.12);left:16.3px;top:393.6px" width="15.6" height="15.6" viewBox="0 0 24 24"><rect x="1.2" y="2.2" width="21.6" height="21" rx="2" fill="url(#gblue)" stroke="#2A5CC0" stroke-width="1"/><rect x="1.7" y="21.4" width="20.6" height="1.8" rx="1" fill="#1E4CA8" opacity=".7"/><path d="M7 10.5L12 15.5L17 10.5" fill="none" stroke="#fff" stroke-width="2.6" stroke-linejoin="miter"/></svg>
<div class="t" style="left:35px;top:394.8px;color:#215DC6">Task Move Down</div>
<svg style="filter:saturate(1.4) brightness(.86) contrast(1.12);left:16.3px;top:415.6px" width="15.6" height="15.6" viewBox="0 0 24 24"><rect x="1.2" y="2.2" width="21.6" height="21" rx="2" fill="url(#gblue)" stroke="#2A5CC0" stroke-width="1"/><rect x="1.7" y="21.4" width="20.6" height="1.8" rx="1" fill="#1E4CA8" opacity=".7"/><path d="M7 12.5L12 7.5L17 12.5M7 18.5L12 13.5L17 18.5" fill="none" stroke="#fff" stroke-width="2.6" stroke-linejoin="miter"/></svg>
<div class="t" style="left:35px;top:416.8px;color:#215DC6">Increase Priority</div>
<svg style="filter:saturate(1.4) brightness(.86) contrast(1.12);left:16.3px;top:437.6px" width="15.6" height="15.6" viewBox="0 0 24 24"><rect x="1.2" y="2.2" width="21.6" height="21" rx="2" fill="url(#gblue)" stroke="#2A5CC0" stroke-width="1"/><rect x="1.7" y="21.4" width="20.6" height="1.8" rx="1" fill="#1E4CA8" opacity=".7"/><path d="M7 7.5L12 12.5L17 7.5M7 13.5L12 18.5L17 13.5" fill="none" stroke="#fff" stroke-width="2.6" stroke-linejoin="miter"/></svg>
<div class="t" style="left:35px;top:438.8px;color:#215DC6">Decrease Priority</div>
<div style="left:12.5px;top:468.5px;width:160px;height:24.5px;border-radius:4px 4px 0 0;background:linear-gradient(90deg,#FFFFFF 0,#FFFFFF 45%,#C9D5F7 100%)"></div>
<div class="t" style="left:39.5px;top:474.0px;font-weight:bold;font-size:11.6px;color:#1F55CC;letter-spacing:0.13px;-webkit-text-stroke:0.45px">Category Operati...</div>
<svg style="left:150.4px;top:470.2px" width="19" height="19" viewBox="0 0 19 19"><circle cx="9.5" cy="9.5" r="7.6" fill="#fff" stroke="#C4D0F0" stroke-width="1.3"/><path d="M6.3 9L9.5 5.8L12.7 9 M6.3 13L9.5 9.8L12.7 13" stroke="#1A3EB0" stroke-width="1.7" fill="none"/></svg>
<svg style="left:11.5px;top:468px" width="24" height="24" viewBox="0 0 24 24"><path d="M1 3.5C1 2.5 1.8 2 2.5 2H8.5L10.5 4H16V8H1Z" fill="#F8DC78" stroke="#DCA838" stroke-width=".9"/><path d="M1 7H19.5V19.5H1Z" fill="#FCEBA0" stroke="#DCA838" stroke-width=".9"/><path d="M1.5 19V8" stroke="#C89428" stroke-width="1"/><rect x="9" y="9" width="10.5" height="13.5" fill="url(#gpaper)" stroke="#6C84B8" stroke-width=".9"/><rect x="10" y="17" width="8.5" height="5" fill="#A8D0F4"/><path d="M12.5 12L15 15" stroke="#303030" stroke-width="1.4"/><path d="M14.5 9.5C16 7 18 8.5 18 8.5S20.5 7 21.5 9.5C22 12 18 14.5 17.5 14.5S14 12 14.5 9.5Z" fill="#DC4C20"/></svg>
<div style="left:12.5px;top:493.0px;width:160px;height:237px;background:#D6DFF7;border:1px solid #fff;border-top:none"></div>
<svg style="filter:saturate(1.4) brightness(.86) contrast(1.12);left:16.3px;top:504.1px" width="15.6" height="15.6" viewBox="0 0 24 24"><path d="M1.5 7V4.5C1.5 3.5 2.2 3 3 3H9L10.5 4.7H21C22 4.7 22.5 5.4 22.5 6.2V7.5H1.5Z" fill="#5594EA" stroke="#7CA4DC" stroke-width=".8"/><path d="M1.5 7.5H22.5V20.5H1.5Z" fill="url(#gfold)" stroke="#7CA4DC" stroke-width=".9"/><path d="M2 21.4H22.5" stroke="#7C8CB0" stroke-width="1" opacity=".8"/><path d="M18.5 0.5V9.5M14.0 5H23.0" stroke="#2C9C3C" stroke-width="3.2"/><path d="M18.5 1.2999999999999998V8.7M14.8 5H22.2" stroke="#58C060" stroke-width="1.4"/></svg>
<div class="t" style="left:35px;top:505.3px;color:#215DC6">New Category</div>
<svg style="filter:saturate(1.4) brightness(.86) contrast(1.12);left:16.3px;top:526.0999999999999px" width="15.6" height="15.6" viewBox="0 0 24 24"><path d="M5.5 6V19.5H10M5.5 10H10M5.5 14.7H10" stroke="#4C84DC" stroke-width="1.2" fill="none"/><rect x="1.5" y="2.5" width="8" height="4" fill="#DCE8FA" stroke="#3C78DC" stroke-width="1"/><rect x="10.5" y="8" width="8" height="4" fill="#DCE8FA" stroke="#3C78DC" stroke-width="1"/><rect x="10.5" y="12.8" width="8" height="4" fill="#DCE8FA" stroke="#3C78DC" stroke-width="1"/><rect x="10.5" y="17.6" width="8" height="4" fill="#DCE8FA" stroke="#3C78DC" stroke-width="1"/><path d="M19.5 0.0V9.0M15.0 4.5H24.0" stroke="#2C9C3C" stroke-width="3.2"/><path d="M19.5 0.7999999999999998V8.2M15.8 4.5H23.2" stroke="#58C060" stroke-width="1.4"/></svg>
<div class="t" style="left:35px;top:527.3px;color:#215DC6">Add Sub Category</div>
<svg style="filter:saturate(1.4) brightness(.86) contrast(1.12);left:16.3px;top:548.0999999999999px" width="15.6" height="15.6" viewBox="0 0 24 24"><path d="M1.5 7V4.5C1.5 3.5 2.2 3 3 3H9L10.5 4.7H21C22 4.7 22.5 5.4 22.5 6.2V7.5H1.5Z" fill="#5594EA" stroke="#7CA4DC" stroke-width=".8"/><path d="M1.5 7.5H22.5V20.5H1.5Z" fill="url(#gfold)" stroke="#7CA4DC" stroke-width=".9"/><path d="M2 21.4H22.5" stroke="#7C8CB0" stroke-width="1" opacity=".8"/><path d="M5 11H13M5 14H11" stroke="#A8BCE0" stroke-width="1"/><path d="M8 17L9.5 12.5L19.5 2.5L22.5 5.5L12.5 15.5Z" fill="#F0B848" stroke="#B88428" stroke-width=".7"/><path d="M19.5 2.5L21 1.2C22.3 .8 23.8 2.2 23.5 3.8L22.5 5.5Z" fill="#DC4C34"/><path d="M8 17L9.5 12.5L12.5 15.5Z" fill="#F4E4C0"/><path d="M8 17L8.6 15.2L9.8 16.3Z" fill="#303030"/></svg>
<div class="t" style="left:35px;top:549.3px;color:#215DC6">Edit Category</div>
<svg style="filter:saturate(1.4) brightness(.86) contrast(1.12);left:16.3px;top:570.0999999999999px" width="15.6" height="15.6" viewBox="0 0 24 24"><path d="M1.5 7V4.5C1.5 3.5 2.2 3 3 3H9L10.5 4.7H21C22 4.7 22.5 5.4 22.5 6.2V7.5H1.5Z" fill="#5594EA" stroke="#7CA4DC" stroke-width=".8"/><path d="M1.5 7.5H22.5V20.5H1.5Z" fill="url(#gfold)" stroke="#7CA4DC" stroke-width=".9"/><path d="M2 21.4H22.5" stroke="#7C8CB0" stroke-width="1" opacity=".8"/><path d="M12.5 11L21.5 21.5M21.5 11L12.5 21.5" stroke="#E0583C" stroke-width="2.2" stroke-linecap="round"/></svg>
<div class="t" style="left:35px;top:571.3px;color:#215DC6">Delete Category</div>
<svg style="filter:saturate(1.4) brightness(.86) contrast(1.12);left:16.3px;top:592.0999999999999px" width="15.6" height="15.6" viewBox="0 0 24 24"><path d="M1.5 7V4.5C1.5 3.5 2.2 3 3 3H9L10.5 4.7H21C22 4.7 22.5 5.4 22.5 6.2V7.5H1.5Z" fill="#5594EA" stroke="#7CA4DC" stroke-width=".8"/><path d="M1.5 7.5H22.5V20.5H1.5Z" fill="url(#gfold)" stroke="#7CA4DC" stroke-width=".9"/><path d="M2 21.4H22.5" stroke="#7C8CB0" stroke-width="1" opacity=".8"/><path d="M12 9.5L16.5 14H13.8V18H10.2V14H7.5Z" fill="#4C88E4" stroke="#2C60C0" stroke-width=".7"/></svg>
<div class="t" style="left:35px;top:593.3px;color:#215DC6">Category Move Up</div>
<svg style="filter:saturate(1.4) brightness(.86) contrast(1.12);left:16.3px;top:614.0999999999999px" width="15.6" height="15.6" viewBox="0 0 24 24"><path d="M1.5 7V4.5C1.5 3.5 2.2 3 3 3H9L10.5 4.7H21C22 4.7 22.5 5.4 22.5 6.2V7.5H1.5Z" fill="#D4D2CA" stroke="#B8B6AE" stroke-width=".8"/><path d="M1.5 7.5H22.5V20.5H1.5Z" fill="url(#gfoldg)" stroke="#B8B6AE" stroke-width=".9"/><path d="M2 21.4H22.5" stroke="#7C8CB0" stroke-width="1" opacity=".8"/><path d="M12 18.5L16.5 14H13.8V10H10.2V14H7.5Z" fill="#BCBAB2" stroke="#A4A29A" stroke-width=".7"/></svg>
<div class="t" style="left:35px;top:615.3px;color:#7F9AD8">Category Move Down</div>
<svg style="filter:saturate(1.4) brightness(.86) contrast(1.12);left:16.3px;top:636.0999999999999px" width="15.6" height="15.6" viewBox="0 0 24 24"><path d="M5.5 3L10.5 9.5H7.8V22H3.2V9.5H0.5Z" fill="#4C8CE4" stroke="#2A60B8" stroke-width=".8"/><g fill="#4CAC50" stroke="#2C8434" stroke-width=".7"><rect x="11.5" y="2.5" width="4" height="3"/><rect x="11.5" y="7" width="7" height="3"/><rect x="11.5" y="11.5" width="9" height="3"/><rect x="11.5" y="16" width="11" height="3"/><rect x="11.5" y="20" width="12" height="2.5"/></g></svg>
<div class="t" style="left:35px;top:637.3px;color:#215DC6">Sort Categories</div>
<svg style="filter:saturate(1.4) brightness(.86) contrast(1.12);left:16.3px;top:658.0999999999999px" width="15.6" height="15.6" viewBox="0 0 24 24"><path d="M1.5 7V4.5C1.5 3.5 2.2 3 3 3H9L10.5 4.7H21C22 4.7 22.5 5.4 22.5 6.2V7.5H1.5Z" fill="#5594EA" stroke="#7CA4DC" stroke-width=".8"/><path d="M1.5 7.5H22.5V20.5H1.5Z" fill="url(#gfold)" stroke="#7CA4DC" stroke-width=".9"/><path d="M2 21.4H22.5" stroke="#7C8CB0" stroke-width="1" opacity=".8"/><path d="M7 13.5L12 9V11.8H16.5V15.2H12V18Z" fill="#4C88E4" stroke="#2C60C0" stroke-width=".7"/></svg>
<div class="t" style="left:35px;top:659.3px;color:#215DC6">Category Outdent</div>
<svg style="filter:saturate(1.4) brightness(.86) contrast(1.12);left:16.3px;top:680.0999999999999px" width="15.6" height="15.6" viewBox="0 0 24 24"><path d="M1.5 7V4.5C1.5 3.5 2.2 3 3 3H9L10.5 4.7H21C22 4.7 22.5 5.4 22.5 6.2V7.5H1.5Z" fill="#5594EA" stroke="#7CA4DC" stroke-width=".8"/><path d="M1.5 7.5H22.5V20.5H1.5Z" fill="url(#gfold)" stroke="#7CA4DC" stroke-width=".9"/><path d="M2 21.4H22.5" stroke="#7C8CB0" stroke-width="1" opacity=".8"/><path d="M17 13.5L12 9V11.8H7.5V15.2H12V18Z" fill="#4C88E4" stroke="#2C60C0" stroke-width=".7"/></svg>
<div class="t" style="left:35px;top:681.3px;color:#215DC6">Category Indent</div>
<div class="t" style="left:35px;top:703.3px;color:#215DC6">Set Filter by &#x27;6. Weekly C...</div>
<div style="left:184.5px;top:84.5px;width:820px;height:2px;background:#DDDFE1"></div>
<div style="left:184.5px;top:86.2px;width:820px;height:885.8px;background:#FAF9F5;border-top:1.3px solid #8C9CAA;border-right:1.8px solid #86A3CC;border-left:2px solid #A4BCE4"></div>
<div style="left:185.5px;top:87.5px;width:800.5px;height:34px;background:#ADAD9E;border-bottom:1.2px solid #9C9A8C"></div>
<div style="left:192px;top:95px;width:68.5px;height:20px;background:#ECE9D8;border:1px solid #F8F7F0;border-right-color:#C8C4B0;border-bottom-color:#C8C4B0"></div>
<div class="t" style="left:195px;top:98px;">Category</div>
<svg style="left:248px;top:100px" width="9" height="9" viewBox="0 0 9 9"><path d="M4.5 1L8 8H1Z" fill="none" stroke="#A8A698" stroke-width="1"/></svg>
<div style="left:185.5px;top:121.5px;width:800.5px;height:18.5px;background:#ECE9D8;border-top:1.2px solid #FAF6E6"></div>
<div style="left:185.5px;top:139.2px;width:800.5px;height:1.2px;background:repeating-linear-gradient(90deg,#CFCBB6 0,#CFCBB6 1.25px,#F4F1E0 1.25px,#F4F1E0 2.5px)"></div>
<div class="t" style="left:563px;top:125px;">Name</div>
<svg style="left:969px;top:124px" width="14" height="13" viewBox="0 0 14 13"><rect x="0.5" y="0.5" width="13" height="12" rx="2" fill="#C5D4F6" stroke="#D9E2F8"/><path d="M3.5 4.5L7 8L10.5 4.5" stroke="#3D5F9E" stroke-width="1.8" fill="none"/></svg>
<div style="left:185.5px;top:140.0px;width:800.5px;height:18.0px;background:#ECE9D8"></div>
<div class="t" style="left:188px;top:142.5px;">Category : 1. Ages 2-4</div>
<div style="left:185.5px;top:158.0px;width:14.5px;height:176.0px;background:#ECE9D8"></div>
<div style="left:200px;top:158.0px;width:786px;height:176.0px;background:#fff;border-left:1px solid #C8C4B0"></div>
<div style="left:200px;top:158.0px;width:786px;height:1px;background:#C8C4B0"></div>
<div class="t" style="left:202.5px;top:162.5px;letter-spacing:-0.1px">Put toys to their places</div>
<div style="left:200px;top:180.0px;width:786px;height:1px;background:#C8C4B0"></div>
<div class="t" style="left:202.5px;top:184.5px;letter-spacing:-0.1px">Pick out and put clothes in a drawer</div>
<div style="left:200px;top:202.0px;width:786px;height:1px;background:#C8C4B0"></div>
<div class="t" style="left:202.5px;top:206.5px;letter-spacing:-0.1px">Put books in a pile</div>
<div style="left:200px;top:224.0px;width:786px;height:1px;background:#C8C4B0"></div>
<div class="t" style="left:202.5px;top:228.5px;letter-spacing:-0.1px">Water plants and flowers</div>
<div style="left:200px;top:246.0px;width:786px;height:1px;background:#C8C4B0"></div>
<div class="t" style="left:202.5px;top:250.5px;letter-spacing:-0.1px">Get dressed</div>
<div style="left:200px;top:268.0px;width:786px;height:1px;background:#C8C4B0"></div>
<div class="t" style="left:202.5px;top:272.5px;letter-spacing:-0.1px">Clean spills</div>
<div style="left:200px;top:290.0px;width:786px;height:1px;background:#C8C4B0"></div>
<div class="t" style="left:202.5px;top:294.5px;letter-spacing:-0.1px">Clear table</div>
<div style="left:200px;top:312.0px;width:786px;height:1px;background:#C8C4B0"></div>
<div class="t" style="left:202.5px;top:316.5px;letter-spacing:-0.1px">Dust</div>
<div style="left:200px;top:334.0px;width:786px;height:1px;background:#C8C4B0"></div>
<div style="left:185.5px;top:334.0px;width:800.5px;height:18.0px;background:#ECE9D8"></div>
<div class="t" style="left:188px;top:336.5px;">Category : 2. Ages 5-7</div>
<div style="left:185.5px;top:352.0px;width:14.5px;height:242.0px;background:#ECE9D8"></div>
<div style="left:200px;top:352.0px;width:786px;height:242.0px;background:#fff;border-left:1px solid #C8C4B0"></div>
<div style="left:200px;top:352.0px;width:786px;height:1px;background:#C8C4B0"></div>
<div class="t" style="left:202.5px;top:356.5px;letter-spacing:-0.1px">The same chores as for ages 2-4</div>
<div style="left:200px;top:374.0px;width:786px;height:1px;background:#C8C4B0"></div>
<div class="t" style="left:202.5px;top:378.5px;letter-spacing:-0.1px">Help make meals</div>
<div style="left:200px;top:396.0px;width:786px;height:1px;background:#C8C4B0"></div>
<div class="t" style="left:202.5px;top:400.5px;letter-spacing:-0.1px">Make Bed</div>
<div style="left:200px;top:418.0px;width:786px;height:1px;background:#C8C4B0"></div>
<div class="t" style="left:202.5px;top:422.5px;letter-spacing:-0.1px">Help empty dishwasher and wastebasket</div>
<div style="left:200px;top:440.0px;width:786px;height:1px;background:#C8C4B0"></div>
<div class="t" style="left:202.5px;top:444.5px;letter-spacing:-0.1px">Bring in Mail</div>
<div style="left:200px;top:462.0px;width:786px;height:1px;background:#C8C4B0"></div>
<div class="t" style="left:202.5px;top:466.5px;letter-spacing:-0.1px">Feed Pet</div>
<div style="left:200px;top:484.0px;width:786px;height:1px;background:#C8C4B0"></div>
<div class="t" style="left:202.5px;top:488.5px;letter-spacing:-0.1px">Sort laundry</div>
<div style="left:200px;top:506.0px;width:786px;height:1px;background:#C8C4B0"></div>
<div class="t" style="left:202.5px;top:510.5px;letter-spacing:-0.1px">Sweep floor</div>
<div style="left:200px;top:528.0px;width:786px;height:1px;background:#C8C4B0"></div>
<div class="t" style="left:202.5px;top:532.5px;letter-spacing:-0.1px">Keep clean; wash</div>
<div style="left:200px;top:550.0px;width:786px;height:1px;background:#C8C4B0"></div>
<div class="t" style="left:202.5px;top:554.5px;letter-spacing:-0.1px">Rake leaves</div>
<div style="left:200px;top:572.0px;width:786px;height:1px;background:#C8C4B0"></div>
<div class="t" style="left:202.5px;top:576.5px;letter-spacing:-0.1px">Clean bedroom</div>
<div style="left:200px;top:594.0px;width:786px;height:1px;background:#C8C4B0"></div>
<div style="left:185.5px;top:594.0px;width:800.5px;height:18.0px;background:#ECE9D8"></div>
<div class="t" style="left:188px;top:596.5px;">Category : 3. Ages 8-10</div>
<div style="left:185.5px;top:612.0px;width:14.5px;height:176.0px;background:#ECE9D8"></div>
<div style="left:200px;top:612.0px;width:786px;height:176.0px;background:#fff;border-left:1px solid #C8C4B0"></div>
<div style="left:200px;top:612.0px;width:786px;height:1px;background:#C8C4B0"></div>
<div class="t" style="left:202.5px;top:616.5px;letter-spacing:-0.1px">The same chores as for ages 5-7</div>
<div style="left:200px;top:634.0px;width:786px;height:1px;background:#C8C4B0"></div>
<div class="t" style="left:202.5px;top:638.5px;letter-spacing:-0.1px">Walk pet</div>
<div style="left:200px;top:656.0px;width:786px;height:1px;background:#C8C4B0"></div>
<div class="t" style="left:202.5px;top:660.5px;letter-spacing:-0.1px">Load dishwasher</div>
<div style="left:200px;top:678.0px;width:786px;height:1px;background:#C8C4B0"></div>
<div class="t" style="left:202.5px;top:682.5px;letter-spacing:-0.1px">Put away groceries</div>
<div style="left:200px;top:700.0px;width:786px;height:1px;background:#C8C4B0"></div>
<div class="t" style="left:202.5px;top:704.5px;letter-spacing:-0.1px">Vacuum</div>
<div style="left:200px;top:722.0px;width:786px;height:1px;background:#C8C4B0"></div>
<div class="t" style="left:202.5px;top:726.5px;letter-spacing:-0.1px">Prepare breakfast</div>
<div style="left:200px;top:744.0px;width:786px;height:1px;background:#C8C4B0"></div>
<div class="t" style="left:202.5px;top:748.5px;letter-spacing:-0.1px">Help prepare dinner</div>
<div style="left:200px;top:766.0px;width:786px;height:1px;background:#C8C4B0"></div>
<div class="t" style="left:202.5px;top:770.5px;letter-spacing:-0.1px">Put away laundry</div>
<div style="left:200px;top:788.0px;width:786px;height:1px;background:#C8C4B0"></div>
<div style="left:185.5px;top:788.0px;width:800.5px;height:18.0px;background:#ECE9D8"></div>
<div class="t" style="left:188px;top:790.5px;">Category : 4. Teen Ages</div>
<div style="left:185.5px;top:806.0px;width:14.5px;height:110.0px;background:#ECE9D8"></div>
<div style="left:200px;top:806.0px;width:786px;height:110.0px;background:#fff;border-left:1px solid #C8C4B0"></div>
<div style="left:200px;top:806.0px;width:786px;height:1px;background:#C8C4B0"></div>
<div class="t" style="left:202.5px;top:810.5px;letter-spacing:-0.1px">Wash car</div>
<div style="left:200px;top:828.0px;width:786px;height:1px;background:#C8C4B0"></div>
<div class="t" style="left:202.5px;top:832.5px;letter-spacing:-0.1px">Iron clothes</div>
<div style="left:200px;top:850.0px;width:786px;height:1px;background:#C8C4B0"></div>
<div class="t" style="left:202.5px;top:854.5px;letter-spacing:-0.1px">Do laundry</div>
<div style="left:200px;top:872.0px;width:786px;height:1px;background:#C8C4B0"></div>
<div class="t" style="left:202.5px;top:876.5px;letter-spacing:-0.1px">Clean the house</div>
<div style="left:200px;top:894.0px;width:786px;height:1px;background:#C8C4B0"></div>
<div class="t" style="left:202.5px;top:898.5px;letter-spacing:-0.1px">Buy food</div>
<div style="left:200px;top:916.0px;width:786px;height:1px;background:#C8C4B0"></div>
<div style="left:185.5px;top:916px;width:800.5px;height:28.5px;background:#ECE9D8;border-top:1px solid #C8C4B0"></div>
<div style="left:187.5px;top:920.5px;width:795px;height:21px;background:#EFECE0;border:1px solid #C8C4B0;border-right-color:#F8F7F2;border-bottom-color:#F8F7F2"></div>
<div class="t" style="left:192px;top:925px;">Count: 52</div>
<div style="left:986px;top:87px;width:17.5px;height:857.5px;background:linear-gradient(90deg,#F3F2EC,#FDFDFB 30%,#FEFEFC)"></div>
<div style="left:987px;top:87px;width:16px;height:16px;background:#C3D3F7;border:1px solid #DCE5FA;border-radius:2px"></div>
<svg style="left:990px;top:91px" width="10" height="8" viewBox="0 0 10 8"><path d="M1 6.5L5 2.5L9 6.5" stroke="#44639E" stroke-width="2" fill="none"/></svg>
<div style="left:987px;top:104px;width:16px;height:508px;background:linear-gradient(90deg,#C8D7F8,#BFD0F5 70%,#B4C6EE);border:1px solid #DCE5FA;border-radius:2px"></div>
<div style="left:991px;top:354px;width:7px;height:1px;background:#8FA8DC"></div>
<div style="left:991px;top:356px;width:7px;height:1px;background:#8FA8DC"></div>
<div style="left:991px;top:358px;width:7px;height:1px;background:#8FA8DC"></div>
<div style="left:991px;top:360px;width:7px;height:1px;background:#8FA8DC"></div>
<div style="left:987px;top:928px;width:16px;height:16px;background:#C3D3F7;border:1px solid #DCE5FA;border-radius:2px"></div>
<svg style="left:990px;top:933px" width="10" height="8" viewBox="0 0 10 8"><path d="M1 1.5L5 5.5L9 1.5" stroke="#44639E" stroke-width="2" fill="none"/></svg>
<div style="left:185.5px;top:944.5px;width:818px;height:1px;background:#8FAAD2"></div>
<div style="left:185.5px;top:945.5px;width:818px;height:26.5px;background:linear-gradient(#F8F8F5,#F3F2EB)"></div>
<div style="left:187.5px;top:948px;width:119px;height:24px;background:linear-gradient(#FDFDFB,#F3F2EA);border:1px solid #A9AB9E;border-bottom:none;border-radius:4px 4px 0 0"></div>
<div style="left:210.5px;top:949px;width:1px;height:23px;background:#A9AB9E"></div>
<div class="t" style="left:190px;top:953px;">S...</div>
<div class="t" style="left:214px;top:953px;">Note</div>
<div style="left:1006px;top:87.5px;width:271.5px;height:21.5px;border:1px solid #B9C6EA;border-radius:4px 4px 0 0;background:linear-gradient(#DCE3F8,#D3DCF5)"></div>
<div class="t" style="left:1010px;top:91px;">Categories Bar</div>
<svg style="left:1229px;top:92px" width="12" height="12" viewBox="0 0 12 12"><rect x="0.5" y="0.5" width="11" height="11" rx="2" fill="#2A67D8" stroke="#1E55C4"/><rect x="3.5" y="3.5" width="5" height="5" fill="none" stroke="#fff" stroke-width="1.4"/></svg>
<svg style="left:1245px;top:91px" width="12" height="14" viewBox="0 0 12 14"><path d="M2.5 1.6H9.5M1.2 8H10.8M6 8.5V13.5" stroke="#2050C4" stroke-width="1.7" fill="none"/><path d="M3.6 2V8H8.4V2Z" fill="#8CAAE8" stroke="#2050C4" stroke-width="1.3"/><path d="M7.6 2V8" stroke="#2050C4" stroke-width="1.3"/></svg>
<svg style="left:1260px;top:91.5px" width="13" height="13" viewBox="0 0 13 13"><rect x="0.5" y="0.5" width="12" height="12" rx="1.2" fill="#D4502A" stroke="#C8441E"/><path d="M3.2 3.2L9.8 9.8M9.8 3.2L3.2 9.8" stroke="#fff" stroke-width="2.4"/></svg>
<div style="left:1006px;top:110.5px;width:271.5px;height:416px;background:#fff;border:1px solid #8FAAD2"></div>
<div style="left:1007px;top:111.5px;width:269.5px;height:19px;background:#ECE9D8;border-bottom:1px solid #D6D2C2"></div>
<div style="left:1189px;top:114px;width:1px;height:13px;background:#B8B4A2"></div>
<div style="left:1228.3px;top:114px;width:1px;height:13px;background:#B8B4A2"></div>
<div class="t" style="left:1193px;top:114.5px;">UnD...</div>
<div style="left:1229.5px;top:111.5px;width:47px;height:19px;background:linear-gradient(#FBFAF6,#F5F3EA);border-bottom:3px solid #EEB04A"></div>
<div class="t" style="left:1241px;top:114.5px;">Total</div>
<svg style="left:1011.8px;top:134.8px" width="9" height="9" viewBox="0 0 10 10"><rect x="0.5" y="0.5" width="9" height="9" rx="1.5" fill="#F4F4F0" stroke="#8C9CB8"/><path d="M2.5 5H7.5" stroke="#000" stroke-width="1.2"/></svg>
<div style="left:1023px;top:139.5px;width:5px;height:1px;border-top:1px dotted #BEBAA8"></div>
<svg style="left:1026.5px;top:132.5px" width="15" height="13.2" viewBox="0 0 17 15"><path d="M1 3H6L7.5 4.5H14V12H1Z" fill="#F8D878" stroke="#C8A030" stroke-width=".9"/><path d="M3 7H16.5L14 12.5H1Z" fill="#FCE890" stroke="#C8A030" stroke-width=".9"/><path d="M2 13.5H14" stroke="#E07038" stroke-width="1.3" stroke-dasharray="2 1"/></svg>
<svg style="left:1047px;top:131.5px" width="16" height="16" viewBox="0 0 16 16"><path d="M1 4L7 6V14L1 12Z M15 4L9 6V14L15 12Z" fill="#F4F6FC" stroke="#E07850" stroke-width="1"/><path d="M7 6L8 5L9 6V14L8 13L7 14Z" fill="#8AA0D8"/></svg>
<div class="t" style="left:1067.5px;top:133.0px;letter-spacing:-0.12px">Chores for Children</div>
<div class="t" style="left:1187px;top:133.0px;width:41px;text-align:right;color:#000">32</div>
<div class="t" style="left:1227px;top:133.0px;width:47px;text-align:right;color:#000">32</div>
<div style="left:1035px;top:157.5px;width:10px;height:1px;border-top:1px dotted #BEBAA8"></div>
<svg style="left:1047px;top:149.5px" width="16" height="16" viewBox="0 0 16 16"><path d="M1 4L7 6V14L1 12Z M15 4L9 6V14L15 12Z" fill="#F4F6FC" stroke="#E07850" stroke-width="1"/><path d="M7 6L8 5L9 6V14L8 13L7 14Z" fill="#8AA0D8"/></svg>
<div class="t" style="left:1067.5px;top:151.0px;letter-spacing:-0.12px">1. Ages 2-4</div>
<div class="t" style="left:1187px;top:151.0px;width:41px;text-align:right;color:#000">8</div>
<div class="t" style="left:1227px;top:151.0px;width:47px;text-align:right;color:#000">8</div>
<div style="left:1035px;top:175.5px;width:10px;height:1px;border-top:1px dotted #BEBAA8"></div>
<svg style="left:1047px;top:167.5px" width="16" height="16" viewBox="0 0 16 16"><rect x="2.5" y="2.5" width="11" height="12" fill="#F8F8F8" stroke="#505050"/><rect x="2.5" y="2.5" width="3" height="12" fill="#D86048"/><rect x="7" y="6" width="5" height="6" fill="#C8CCD8" stroke="#606060" stroke-width=".6"/><path d="M5 1V4M8 1V4M11 1V4" stroke="#404040"/></svg>
<div class="t" style="left:1067.5px;top:169.0px;letter-spacing:-0.12px">2. Ages 5-7</div>
<div class="t" style="left:1187px;top:169.0px;width:41px;text-align:right;color:#000">11</div>
<div class="t" style="left:1227px;top:169.0px;width:47px;text-align:right;color:#000">11</div>
<div style="left:1035px;top:193.5px;width:10px;height:1px;border-top:1px dotted #BEBAA8"></div>
<svg style="left:1047px;top:185.5px" width="17" height="16" viewBox="0 0 17 16"><ellipse cx="8.5" cy="9" rx="7.5" ry="5.5" fill="#F0B040" stroke="#C88420"/><circle cx="5" cy="8" r="1.5" fill="#D03020"/><circle cx="8" cy="6" r="1.5" fill="#3050C0"/><circle cx="12" cy="7.5" r="1.5" fill="#30A040"/><circle cx="10" cy="11" r="1.6" fill="#F8F0D8"/></svg>
<div class="t" style="left:1067.5px;top:187.0px;letter-spacing:-0.12px">3. Ages 8-10</div>
<div class="t" style="left:1187px;top:187.0px;width:41px;text-align:right;color:#000">8</div>
<div class="t" style="left:1227px;top:187.0px;width:47px;text-align:right;color:#000">8</div>
<div style="left:1035px;top:211.5px;width:10px;height:1px;border-top:1px dotted #BEBAA8"></div>
<svg style="left:1047px;top:203.5px" width="16" height="17" viewBox="0 0 16 17"><path d="M3 1V16" stroke="#505050" stroke-width="1.6"/><path d="M4 2C7 0.5 9 4 14 2V10C9 12 7 8.5 4 10Z" fill="#3060C8" stroke="#1C3C90" stroke-width=".8"/><path d="M7 3.5V9" stroke="#C8D8F8" stroke-width="1.5"/></svg>
<div class="t" style="left:1067.5px;top:205.0px;letter-spacing:-0.12px">4. Teen Ages</div>
<div class="t" style="left:1187px;top:205.0px;width:41px;text-align:right;color:#000">5</div>
<div class="t" style="left:1227px;top:205.0px;width:47px;text-align:right;color:#000">5</div>
<svg style="left:1011.8px;top:224.8px" width="9" height="9" viewBox="0 0 10 10"><rect x="0.5" y="0.5" width="9" height="9" rx="1.5" fill="#F4F4F0" stroke="#8C9CB8"/><path d="M2.5 5H7.5" stroke="#000" stroke-width="1.2"/></svg>
<div style="left:1023px;top:229.5px;width:5px;height:1px;border-top:1px dotted #BEBAA8"></div>
<svg style="left:1026.5px;top:222.5px" width="15" height="13.2" viewBox="0 0 17 15"><path d="M1 3H6L7.5 4.5H14V12H1Z" fill="#F8D878" stroke="#C8A030" stroke-width=".9"/><path d="M3 7H16.5L14 12.5H1Z" fill="#FCE890" stroke="#C8A030" stroke-width=".9"/><path d="M2 13.5H14" stroke="#E07038" stroke-width="1.3" stroke-dasharray="2 1"/></svg>
<svg style="left:1047px;top:221.5px" width="17" height="16" viewBox="0 0 17 16"><circle cx="5" cy="5" r="3.2" fill="#F0A050" stroke="#B06020" stroke-width=".8"/><path d="M0.5 15C0.5 10 3 9 5 9S9.5 10 9.5 15Z" fill="#3C78D0" stroke="#204890" stroke-width=".8"/><circle cx="12" cy="4.5" r="3.2" fill="#703020" stroke="#401808" stroke-width=".8"/><path d="M8 14C8 9.5 10 8.5 12 8.5S16.5 9.5 16.5 14Z" fill="#40A048" stroke="#206028" stroke-width=".8"/></svg>
<div class="t" style="left:1067.5px;top:223.0px;letter-spacing:-0.12px">Chores for Family</div>
<div class="t" style="left:1187px;top:223.0px;width:41px;text-align:right;color:#000">20</div>
<div class="t" style="left:1227px;top:223.0px;width:47px;text-align:right;color:#000">20</div>
<div style="left:1035px;top:247.5px;width:10px;height:1px;border-top:1px dotted #BEBAA8"></div>
<svg style="left:1047px;top:239.5px" width="17" height="16" viewBox="0 0 17 16"><circle cx="5" cy="5" r="3.2" fill="#F0A050" stroke="#B06020" stroke-width=".8"/><path d="M0.5 15C0.5 10 3 9 5 9S9.5 10 9.5 15Z" fill="#3C78D0" stroke="#204890" stroke-width=".8"/><circle cx="12" cy="4.5" r="3.2" fill="#703020" stroke="#401808" stroke-width=".8"/><path d="M8 14C8 9.5 10 8.5 12 8.5S16.5 9.5 16.5 14Z" fill="#40A048" stroke="#206028" stroke-width=".8"/></svg>
<div class="t" style="left:1067.5px;top:241.0px;letter-spacing:-0.12px">5. Daily Chores</div>
<div class="t" style="left:1187px;top:241.0px;width:41px;text-align:right;color:#000">11</div>
<div class="t" style="left:1227px;top:241.0px;width:47px;text-align:right;color:#000">11</div>
<div style="left:1035px;top:265.5px;width:10px;height:1px;border-top:1px dotted #BEBAA8"></div>
<svg style="left:1047px;top:257.5px" width="16" height="16" viewBox="0 0 16 16"><rect x="2.5" y="2.5" width="11" height="12" fill="#F8F8F8" stroke="#505050"/><rect x="2.5" y="2.5" width="3" height="12" fill="#D86048"/><rect x="7" y="6" width="5" height="6" fill="#C8CCD8" stroke="#606060" stroke-width=".6"/><path d="M5 1V4M8 1V4M11 1V4" stroke="#404040"/></svg>
<div style="left:1191px;top:256.5px;width:85.5px;height:18.0px;background:#2F62C8"></div>
<div style="left:1045px;top:256.5px;width:146.5px;height:18.0px;border:1px dotted #605C50"></div>
<div class="t" style="left:1067.5px;top:259.0px;letter-spacing:-0.12px">6. Weekly Chores</div>
<div class="t" style="left:1187px;top:259.0px;width:41px;text-align:right;color:#fff">9</div>
<div class="t" style="left:1227px;top:259.0px;width:47px;text-align:right;color:#fff">9</div>
<div style="left:1017px;top:144.5px;width:1px;height:85.0px;border-left:1px dotted #BEBAA8"></div>
<div style="left:1035px;top:146.5px;width:1px;height:65.0px;border-left:1px dotted #BEBAA8"></div>
<div style="left:1035px;top:236.5px;width:1px;height:29.0px;border-left:1px dotted #BEBAA8"></div>
<div style="left:1006px;top:531.3px;width:271.5px;height:20.7px;border:1px solid #C9C5B2;border-radius:4px;background:linear-gradient(#FEFEFC,#F1EFE4)"></div>
<div class="t" style="left:1010px;top:534.5px;">Filters Bar</div>
<svg style="left:1229px;top:535.5px" width="12" height="12" viewBox="0 0 12 12"><rect x="0.5" y="0.5" width="11" height="11" rx="2" fill="#2A67D8" stroke="#1E55C4"/><rect x="3.5" y="3.5" width="5" height="5" fill="none" stroke="#fff" stroke-width="1.4"/></svg>
<svg style="left:1245px;top:534.5px" width="12" height="14" viewBox="0 0 12 14"><path d="M2.5 1.6H9.5M1.2 8H10.8M6 8.5V13.5" stroke="#2050C4" stroke-width="1.7" fill="none"/><path d="M3.6 2V8H8.4V2Z" fill="#8CAAE8" stroke="#2050C4" stroke-width="1.3"/><path d="M7.6 2V8" stroke="#2050C4" stroke-width="1.3"/></svg>
<svg style="left:1260px;top:535.0px" width="13" height="13" viewBox="0 0 13 13"><rect x="0.5" y="0.5" width="12" height="12" rx="1.2" fill="#D4502A" stroke="#C8441E"/><path d="M3.2 3.2L9.8 9.8M9.8 3.2L3.2 9.8" stroke="#fff" stroke-width="2.4"/></svg>
<div style="left:1006px;top:552px;width:271.5px;height:420px;background:#ECE9D8;border-right:1px solid #A8A494;border-bottom:1.5px solid #8C8878"></div>
<div class="t" style="left:1015.5px;top:560.6px;font-weight:bold;letter-spacing:0.35px">Filter By Complete:</div>
<div style="left:1014px;top:579px;width:121px;height:22px;background:#fff;border:1px solid #7F9DB9"></div>
<div class="t" style="left:1017px;top:583.0px;">All</div>
<svg style="left:1117px;top:581px" width="16" height="18" viewBox="0 0 16 18"><rect x="0.5" y="0.5" width="15" height="17" rx="2" fill="#C1D2F8" stroke="#B4C8F4"/><path d="M4.5 7.0L8 10.5L11.5 7.0" stroke="#3F5E98" stroke-width="2" fill="none"/></svg>
<div class="t" style="left:1015.5px;top:608.8px;font-weight:bold;letter-spacing:0.35px">Filter By Due Date:</div>
<svg style="left:1015.5px;top:633.7px" width="6" height="9" viewBox="0 0 6 9"><path d="M6 0L0 4.5L6 9Z" fill="#000"/></svg>
<svg style="left:1090px;top:633.7px" width="6" height="9" viewBox="0 0 6 9"><path d="M0 0L6 4.5L0 9Z" fill="#000"/></svg>
<svg style="left:1105.3px;top:633.7px" width="6" height="9" viewBox="0 0 6 9"><path d="M6 0L0 4.5L6 9Z" fill="#000"/></svg>
<svg style="left:1149.6px;top:633.7px" width="6" height="9" viewBox="0 0 6 9"><path d="M0 0L6 4.5L0 9Z" fill="#000"/></svg>
<div class="t" style="left:1025.6px;top:631.2px;width:60px;text-align:center">August</div>
<div class="t" style="left:1110.4px;top:631.2px;width:40px;text-align:center">2006</div>
<div style="left:1011px;top:646.5px;width:150px;height:1px;background:#B8B4A2"></div>
<div class="t" style="left:1024.5px;top:648.8px;width:20px;text-align:center">S</div>
<div class="t" style="left:1040.9px;top:648.8px;width:20px;text-align:center">M</div>
<div class="t" style="left:1060.2px;top:648.8px;width:20px;text-align:center">T</div>
<div class="t" style="left:1076.5px;top:648.8px;width:20px;text-align:center">W</div>
<div class="t" style="left:1096.3px;top:648.8px;width:20px;text-align:center">T</div>
<div class="t" style="left:1114.2px;top:648.8px;width:20px;text-align:center">F</div>
<div class="t" style="left:1132.6px;top:648.8px;width:20px;text-align:center">S</div>
<div class="t" style="left:1017.3px;top:665.6px;width:20px;text-align:right;color:#B4B0A0">30</div>
<div class="t" style="left:1035.3px;top:665.6px;width:20px;text-align:right;color:#B4B0A0">31</div>
<div class="t" style="left:1053.3px;top:665.6px;width:20px;text-align:right;color:#000">1</div>
<div class="t" style="left:1071.3px;top:665.6px;width:20px;text-align:right;color:#000">2</div>
<div class="t" style="left:1089.3px;top:665.6px;width:20px;text-align:right;color:#000">3</div>
<div style="left:1112.8px;top:664.9px;width:18.4px;height:15px;background:#2F62C8;border:1px solid #B03820"></div>
<div class="t" style="left:1107.3px;top:665.6px;width:20px;text-align:right;color:#fff">4</div>
<div class="t" style="left:1125.3px;top:665.6px;width:20px;text-align:right;color:#000">5</div>
<div class="t" style="left:1017.3px;top:680.6px;width:20px;text-align:right;color:#000">6</div>
<div class="t" style="left:1035.3px;top:680.6px;width:20px;text-align:right;color:#000">7</div>
<div class="t" style="left:1053.3px;top:680.6px;width:20px;text-align:right;color:#000">8</div>
<div class="t" style="left:1071.3px;top:680.6px;width:20px;text-align:right;color:#000">9</div>
<div class="t" style="left:1089.3px;top:680.6px;width:20px;text-align:right;color:#000">10</div>
<div class="t" style="left:1107.3px;top:680.6px;width:20px;text-align:right;color:#000">11</div>
<div class="t" style="left:1125.3px;top:680.6px;width:20px;text-align:right;color:#000">12</div>
<div class="t" style="left:1017.3px;top:695.6px;width:20px;text-align:right;color:#000">13</div>
<div class="t" style="left:1035.3px;top:695.6px;width:20px;text-align:right;color:#000">14</div>
<div class="t" style="left:1053.3px;top:695.6px;width:20px;text-align:right;color:#000">15</div>
<div class="t" style="left:1071.3px;top:695.6px;width:20px;text-align:right;color:#000">16</div>
<div class="t" style="left:1089.3px;top:695.6px;width:20px;text-align:right;color:#000">17</div>
<div class="t" style="left:1107.3px;top:695.6px;width:20px;text-align:right;color:#000">18</div>
<div class="t" style="left:1125.3px;top:695.6px;width:20px;text-align:right;color:#000">19</div>
<div class="t" style="left:1017.3px;top:710.6px;width:20px;text-align:right;color:#000">20</div>
<div class="t" style="left:1035.3px;top:710.6px;width:20px;text-align:right;color:#000">21</div>
<div class="t" style="left:1053.3px;top:710.6px;width:20px;text-align:right;color:#000">22</div>
<div class="t" style="left:1071.3px;top:710.6px;width:20px;text-align:right;color:#000">23</div>
<div class="t" style="left:1089.3px;top:710.6px;width:20px;text-align:right;color:#000">24</div>
<div class="t" style="left:1107.3px;top:710.6px;width:20px;text-align:right;color:#000">25</div>
<div class="t" style="left:1125.3px;top:710.6px;width:20px;text-align:right;color:#000">26</div>
<div class="t" style="left:1017.3px;top:725.6px;width:20px;text-align:right;color:#000">27</div>
<div class="t" style="left:1035.3px;top:725.6px;width:20px;text-align:right;color:#000">28</div>
<div class="t" style="left:1053.3px;top:725.6px;width:20px;text-align:right;color:#000">29</div>
<div class="t" style="left:1071.3px;top:725.6px;width:20px;text-align:right;color:#000">30</div>
<div class="t" style="left:1089.3px;top:725.6px;width:20px;text-align:right;color:#000">31</div>
<div class="t" style="left:1107.3px;top:725.6px;width:20px;text-align:right;color:#B4B0A0">1</div>
<div class="t" style="left:1125.3px;top:725.6px;width:20px;text-align:right;color:#B4B0A0">2</div>
<div class="t" style="left:1017.3px;top:740.6px;width:20px;text-align:right;color:#B4B0A0">3</div>
<div class="t" style="left:1035.3px;top:740.6px;width:20px;text-align:right;color:#B4B0A0">4</div>
<div class="t" style="left:1053.3px;top:740.6px;width:20px;text-align:right;color:#B4B0A0">5</div>
<div class="t" style="left:1071.3px;top:740.6px;width:20px;text-align:right;color:#B4B0A0">6</div>
<div class="t" style="left:1089.3px;top:740.6px;width:20px;text-align:right;color:#B4B0A0">7</div>
<div class="t" style="left:1107.3px;top:740.6px;width:20px;text-align:right;color:#B4B0A0">8</div>
<div class="t" style="left:1125.3px;top:740.6px;width:20px;text-align:right;color:#B4B0A0">9</div>
<div style="left:1022.5px;top:663px;width:126.5px;height:1px;background:#B8B4A2"></div>
<div style="left:1022.5px;top:755.5px;width:126.5px;height:1px;background:#B8B4A2"></div>
<div style="left:1029px;top:760px;width:46px;height:20px;border:1px solid #1C3F7C;border-radius:3px;background:linear-gradient(#FFFFFF,#F1F0EA 80%,#DAD6C8);box-shadow:inset 0 0 0 1px #C6D6F4"></div>
<div class="t" style="left:1029px;top:763.0px;width:46px;text-align:center">Today</div>
<div style="left:1095px;top:760px;width:46px;height:20px;border:1px solid #1C3F7C;border-radius:3px;background:linear-gradient(#FFFFFF,#F1F0EA 80%,#DAD6C8);box-shadow:inset 0 0 0 1px #C6D6F4"></div>
<div class="t" style="left:1095px;top:763.0px;width:46px;text-align:center">Clear</div>
<div style="left:1013.5px;top:793px;width:145px;height:22px;background:#fff;border:1px solid #7F9DB9"></div>
<div class="t" style="left:1016.5px;top:797.0px;">is less than or equal to</div>
<svg style="left:1140.5px;top:795px" width="16" height="18" viewBox="0 0 16 18"><rect x="0.5" y="0.5" width="15" height="17" rx="2" fill="#C1D2F8" stroke="#B4C8F4"/><path d="M4.5 7.0L8 10.5L11.5 7.0" stroke="#3F5E98" stroke-width="2" fill="none"/></svg>
<div style="left:0px;top:972px;width:1280px;height:22.5px;background:#ECE9D8;border-top:1.2px solid #8C897A"></div>
<div style="left:0px;top:973px;width:1280px;height:1px;background:#F8F7F2"></div>
<div style="left:0px;top:993.8px;width:1280px;height:5px;background:linear-gradient(#4C94F8,#2A6CE6 2px,#2462DC)"></div>
<div style="left:0px;top:993.8px;width:92px;height:5px;background:linear-gradient(#6CC46C,#3C9C3C 2px);border-radius:0 3px 0 0"></div>
<div style="left:1096px;top:993.8px;width:184px;height:5px;background:linear-gradient(#38B4F8,#18A0F0 2px)"></div>
<div style="left:1095px;top:993.8px;width:1.2px;height:5px;background:#1450B8"></div>
</div></body></html>
